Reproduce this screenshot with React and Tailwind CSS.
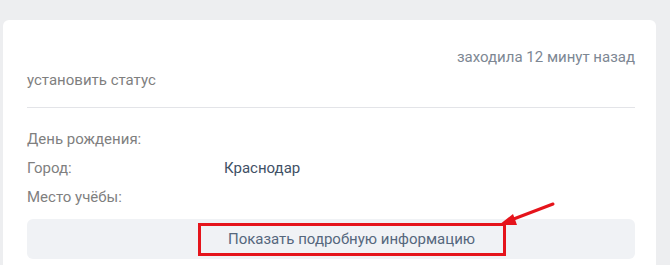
export default function App() {
  return (
    <div className="w-[670px] h-[265px] overflow-hidden bg-[#edeef0] pl-[3px] pr-[14px] pt-[20px]" style={{ fontFamily: "Roboto, 'Liberation Sans', sans-serif" }}>
      <div className="relative bg-white rounded-t-[6px] h-[260px] pl-[24px] pr-[21px] pt-[28px]">
        <div className="flex justify-end text-[15px] text-[#7d8793] leading-[18px]">заходила 12 минут назад</div>
        <div className="text-[15px] text-[#7f7f7f] leading-[18px] mt-[5px]">установить статус</div>
        <div className="h-px bg-[#e3e4e8] mt-[18px]"></div>
        <div className="mt-[22px] flex flex-col gap-[11px] text-[15px] leading-[18px]">
          <div className="flex"><span className="w-[197px] text-[#7f7f7f]">День рождения:</span></div>
          <div className="flex"><span className="w-[197px] text-[#7f7f7f]">Город:</span><span className="text-[#3f5166]">Краснодар</span></div>
          <div className="flex"><span className="w-[197px] text-[#7f7f7f]">Место учёбы:</span></div>
        </div>
        <div className="mt-[13px] h-[40px] bg-[#f0f2f5] rounded-[6px] flex items-center justify-center">
          <div className="border-[3px] border-[#e5141b] w-[308px] h-[33px] flex items-center justify-center text-[15px] text-[#55677d] ml-[41px]">Показать подробную информацию</div>
        </div>
        <svg className="absolute left-[490px] top-[178px]" width="70" height="35" viewBox="0 0 70 35">
          <line x1="60" y1="6" x2="18" y2="22" stroke="#e5141b" strokeWidth="3" strokeLinecap="round" />
          <polygon points="6,27 20,16 24,27" fill="#e5141b" />
        </svg>
      </div>
    </div>
  );
}
